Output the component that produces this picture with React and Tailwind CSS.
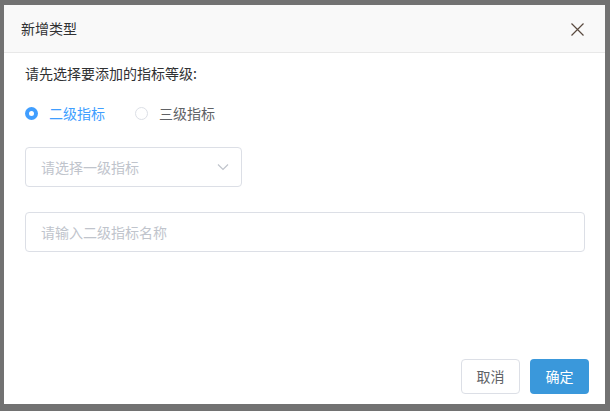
import React, { useState } from "react";

const font = { fontFamily: '"Noto Sans CJK SC", "Noto Sans", sans-serif' };

const Radio = ({ checked, label, onClick }) => (
  <label onClick={onClick} className="flex items-center cursor-pointer">
    {checked ? (
      <span className="w-[13px] h-[13px] rounded-full bg-[#409eff] flex items-center justify-center">
        <span className="w-[5px] h-[5px] rounded-full bg-white" />
      </span>
    ) : (
      <span className="w-[13px] h-[13px] rounded-full border border-[#dcdfe6] bg-white" />
    )}
    <span className={`ml-[11px] text-[14px] ${checked ? "text-[#409eff]" : "text-[#606266]"}`}>{label}</span>
  </label>
);

const App = () => {
  const [level, setLevel] = useState(2);

  return (
    <div className="w-[610px] h-[411px] bg-[#727272] pt-[5px] pl-[4px]" style={font}>
      <div className="w-[601px] h-[399px] bg-white flex flex-col">
        {/* Header */}
        <div className="h-[48px] bg-[#f9f9f9] border-b border-[#e8e8e8] flex items-center justify-between pl-[17px] pr-[21px]">
          <span className="text-[14px] text-[#303133]">新增类型</span>
          <svg width="13" height="13" viewBox="0 0 13 13" className="mt-[1px]">
            <path d="M0.5 0.5 L12.5 12.5 M12.5 0.5 L0.5 12.5" stroke="#5a4a3f" strokeWidth="1.2" fill="none" />
          </svg>
        </div>

        {/* Body */}
        <div className="flex-1 px-[21px] pt-[10px]">
          <p className="text-[14px] leading-[20px] text-[#303133]">请先选择要添加的指标等级:</p>
          <div className="flex items-center mt-[20px] h-[20px] gap-[30px]">
            <Radio checked={level === 2} label="二级指标" onClick={() => setLevel(2)} />
            <Radio checked={level === 3} label="三级指标" onClick={() => setLevel(3)} />
          </div>
          <div className="mt-[24px] w-[217px] h-[40px] border border-[#dcdfe6] rounded-[4px] flex items-center justify-between pl-[15px] pr-[12px]">
            <span className="text-[14px] text-[#c0c4cc]">请选择一级指标</span>
            <svg width="12" height="8" viewBox="0 0 12 8">
              <path d="M1 1.5 L6 6.5 L11 1.5" stroke="#c0c4cc" strokeWidth="1.2" fill="none" />
            </svg>
          </div>
          <div className="mt-[25px] w-[560px] h-[40px] border border-[#dcdfe6] rounded-[4px] flex items-center pl-[15px]">
            <span className="text-[14px] text-[#c0c4cc]">请输入二级指标名称</span>
          </div>
        </div>

        {/* Footer */}
        <div className="flex justify-end gap-[10px] pr-[16px] pb-[10px]">
          <button className="w-[59px] h-[35px] border border-[#dcdfe6] rounded-[4px] bg-white text-[14px] text-[#606266]">取消</button>
          <button className="w-[59px] h-[35px] rounded-[4px] bg-[#3a98db] text-[14px] text-white">确定</button>
        </div>
      </div>
    </div>
  );
};

export default App;
